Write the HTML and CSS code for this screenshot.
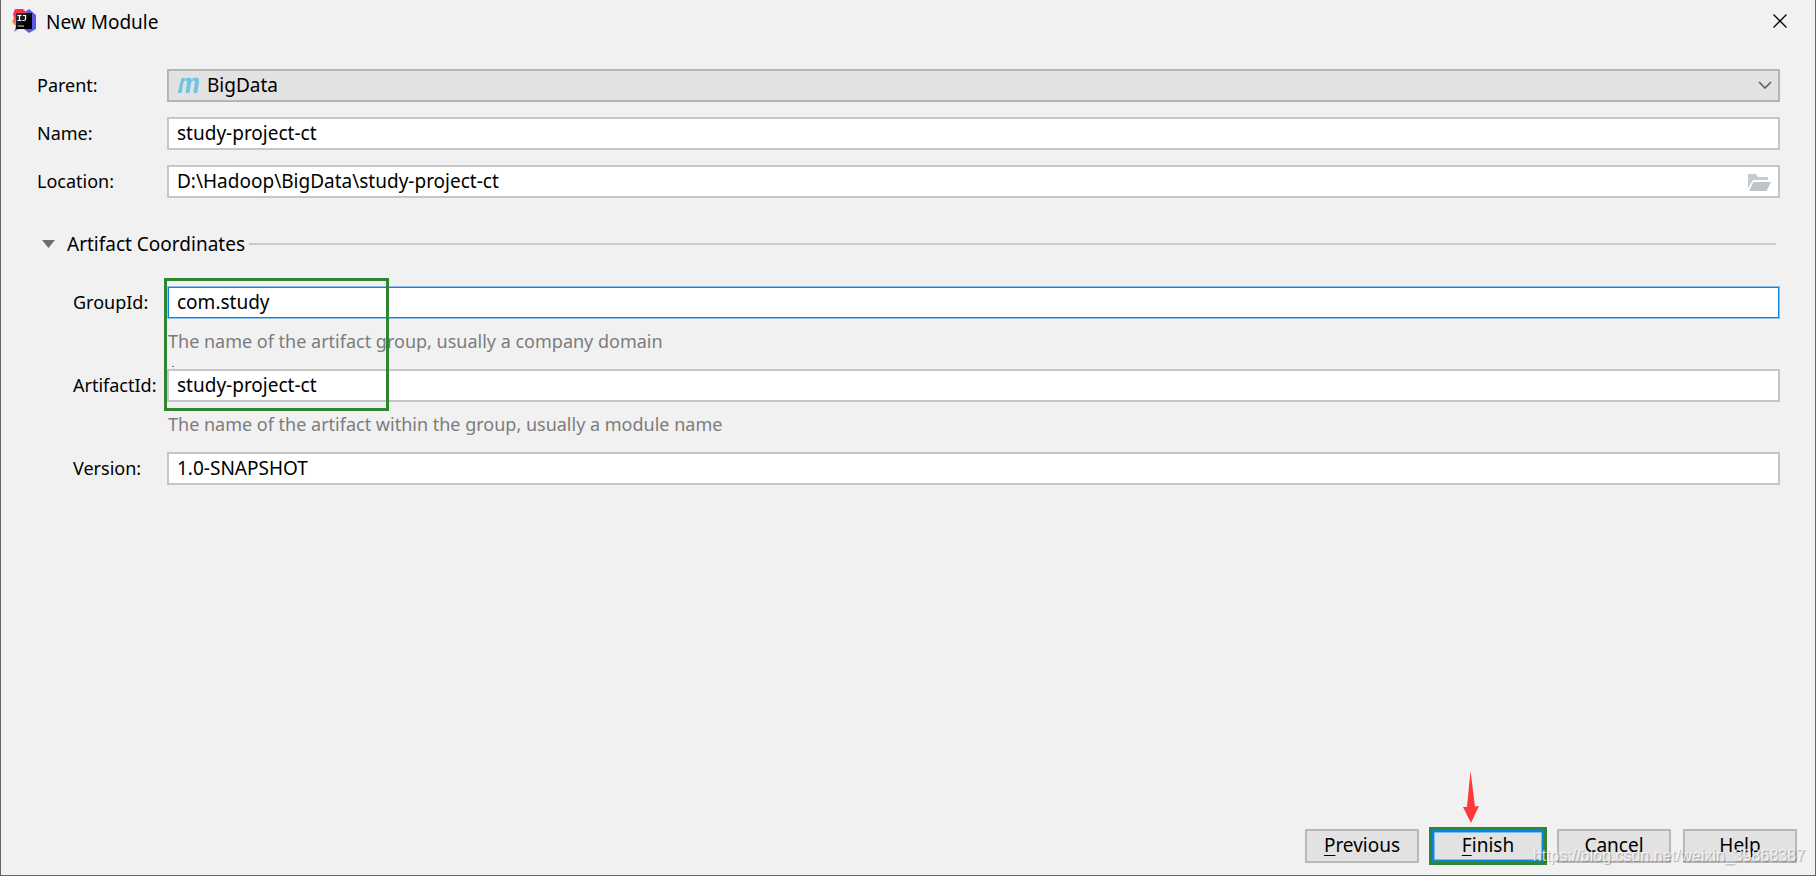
FILE: index.html
```html
<!DOCTYPE html>
<html lang="en">
<head>
<meta charset="utf-8">
<title>New Module</title>
<link rel="stylesheet" href="styles.css">
</head>
<body>
<main class="dialog">
  <header class="titlebar">
    <svg class="app-icon" viewBox="0 0 24 24" aria-hidden="true">
      <defs>
        <linearGradient id="blue" x1="0" y1="0" x2="1" y2="1"><stop offset="0" stop-color="#1b7df0"/><stop offset=".5" stop-color="#6a52e0"/><stop offset="1" stop-color="#3a68ea"/></linearGradient>
        <linearGradient id="warm" x1="0" y1="0" x2="0" y2="1"><stop offset="0" stop-color="#fe2857"/><stop offset=".35" stop-color="#fc3a55"/><stop offset=".6" stop-color="#fc8a24"/><stop offset=".75" stop-color="#e0507a"/><stop offset="1" stop-color="#a45be8"/></linearGradient>
        <linearGradient id="plate" x1="0" y1="0" x2="1" y2="1"><stop offset="0" stop-color="#3a3a3a"/><stop offset=".6" stop-color="#000"/></linearGradient>
      </defs>
      <path d="M13 3 17 0 24 6v14l-7 4-5-4z" fill="url(#blue)"/>
      <path d="M3 0h8l4 4-2 15H8l-6 4 2-6-4-4 2-4-1-4z" fill="url(#warm)"/>
      <path d="M4 4h16v16H4z" fill="url(#plate)"/>
      <path d="M5.500 6.500h4M7.500 6.500v5M5.500 11.500h4M11 6.500h3M13.500 6.500v3.500q0 1.500-1.500 1.500h-1.500" fill="none" stroke="#fff" stroke-width="1.200"/>
      <path d="M6 17h6" stroke="#ddd"/>
    </svg>
    <h1 class="title">New Module</h1>
    <button class="close" type="button" aria-label="Close"><svg viewBox="0 0 14 14"><path d="M.5.5l13 13M13.500.5l-13 13"/></svg></button>
  </header>

  <form class="form">
    <div class="fields">
      <label for="parent">Parent:</label>
      <div class="control">
        <select id="parent" class="field combo"><option>BigData</option></select>
        <svg class="maven" viewBox="0 0 23 17" aria-hidden="true"><path d="M3.500 1h3.800l-.3 1.800Q8.600.6 11 .6q2.300 0 2.700 2.200Q15.400.6 18 .6q3.900 0 3.200 4.200L19.500 16h-4L17 6q.4-2.400-1.200-2.400-2 0-2.700 3.400L11.700 16h-4l1.500-10q.4-2.400-1.200-2.400-2 0-2.700 3.400L4 16H0z" transform="translate(.8)"/></svg>
        <svg class="chevron" viewBox="0 0 14 8" aria-hidden="true"><path d="M1 1l6 6 6-6"/></svg>
      </div>
      <label for="name">Name:</label>
      <input id="name" class="field" type="text" value="study-project-ct">
      <label for="location">Location:</label>
      <div class="control">
        <input id="location" class="field path" type="text" value="D:\Hadoop\BigData\study-project-ct">
        <button class="browse" type="button" aria-label="Browse"><svg viewBox="0 0 23 17"><path d="M0 14V0h8l2 3h10v3H5z" fill="#c5cacf"/><path d="M5.500 8H23l-4.500 9H1z" fill="#bec4c8"/></svg></button>
      </div>
    </div>

    <div class="section">
      <button class="toggle" type="button" aria-expanded="true"><svg viewBox="0 0 13 8" aria-hidden="true"><path d="M0 0h13L6.500 8z"/></svg>Artifact Coordinates</button>
      <hr class="rule">
    </div>

    <div class="coordinates">
      <label for="group">GroupId:</label>
      <input id="group" class="field focused" type="text" value="com.study">
      <p class="hint clipped">The name of the artifact group, usually a company domain</p>
      <label for="artifact">ArtifactId:</label>
      <input id="artifact" class="field" type="text" value="study-project-ct">
      <p class="hint">The name of the artifact within the group, usually a module name</p>
      <label for="version">Version:</label>
      <input id="version" class="field" type="text" value="1.0-SNAPSHOT">
      <div class="highlight"></div>
    </div>
  </form>

  <footer class="actions">
    <button class="button" type="button"><u>P</u>revious</button>
    <button class="button primary" type="button"><u>F</u>inish
      <svg class="arrow" viewBox="0 0 16 52" aria-hidden="true"><path d="M7.500 0 12 35.500l4-.5L8 52 0 36l4 0z"/></svg>
    </button>
    <button class="button" type="button">Cancel</button>
    <button class="button" type="button">Help</button>
  </footer>
  <span class="watermark">https://blog.csdn.net/weixin_39868387</span>
</main>
</body>
</html>
```
FILE: styles.css
```css
* { box-sizing: border-box; }
body {
  margin: 0;
  background: #f1f1f1;
  color: #000;
  font: 19px/24px "Noto Sans", "Open Sans", sans-serif;
}
button, input, select { font: inherit; color: inherit; margin: 0; }
button { padding: 0; border: 0; background: none; }
svg { display: block; }

.dialog {
  position: relative;
  display: flex;
  flex-direction: column;
  min-height: 100vh;
  border: solid #666;
  border-width: 0 1px 1px;
}
.titlebar {
  display: flex;
  align-items: center;
  height: 44px;
  padding: 0 28px 2px 11px;
}
.app-icon { width: 24px; height: 24px; }
.title { flex: 1; margin: 0 0 0 10px; padding-top: 2px; font-size: 19px; font-weight: 400; }
.close svg { width: 14px; height: 14px; fill: none; stroke: #000; stroke-width: 1.3; }

.form { flex: 1; padding: 25px 35px 0 36px; }
.fields, .coordinates {
  display: grid;
  align-items: center;
}
.fields { grid-template-columns: 130px 1fr; row-gap: 15px; }
label { padding-bottom: 2px; font-size: 18px; }
.control { position: relative; }
.field {
  display: block;
  width: 100%;
  height: 33px;
  padding: 0 9px 2px;
  border: 1px solid #c6c6c6;
  border-radius: 0;
  background: #fff;
  box-shadow: inset 0 0 0 1px #c6c6c6;
  outline: 0;
}
.combo {
  appearance: none;
  padding-left: 39px;
  border-color: #b2b2b2;
  background: #e2e2e2;
  box-shadow: inset 0 0 0 1px #b8b8b8;
}
.path { padding-right: 40px; }
.focused { border-color: #8cc2ed; box-shadow: inset 0 0 0 1px #0a84dc; }
.maven { position: absolute; left: 10px; top: 8px; width: 23px; height: 17px; fill: #71c5e3; }
.chevron { position: absolute; right: 8px; top: 12px; width: 14px; height: 8px; fill: none; stroke: #5c5c5c; stroke-width: 1.6; }
.browse { position: absolute; right: 9px; top: 9px; }
.browse svg { width: 23px; height: 17px; }

.section { display: flex; align-items: center; gap: 4px; margin: 34px 4px 30px 5px; }
.toggle { display: flex; align-items: center; gap: 12px; }
.toggle svg { width: 13px; height: 8px; fill: #6e6e6e; }
.rule { flex: 1; height: 2px; margin: 0; border: 0; background: #c9c9c9; }

.coordinates { position: relative; grid-template-columns: 94px 1fr; padding-left: 36px; }
.hint {
  position: relative;
  grid-column: 2;
  margin: 0;
  padding: 10px 0 16px 1px;
  color: #7c7c7c;
  font-size: 18px;
}
.clipped::after {
  content: "";
  position: absolute;
  left: 5px;
  bottom: 2px;
  width: 2px;
  height: 1px;
  background: #777;
}
.highlight {
  position: absolute;
  left: 127px;
  top: -8px;
  width: 225px;
  height: 133px;
  border: 3px solid #2f8532;
}

.actions { display: flex; justify-content: flex-end; gap: 12px; padding: 0 18px 12px; }
.button {
  position: relative;
  width: 114px;
  height: 34px;
  padding-bottom: 2px;
  border: 2px solid #b8b8b8;
  background: #e2e2e2;
}
.primary {
  border: 3px solid #0a84dc;
  box-shadow: inset 0 0 0 1px #7dbdec;
  outline: 3px solid #2f8532;
  outline-offset: -1px;
}
.arrow { position: absolute; left: 29px; top: -61px; width: 16px; height: 52px; fill: #fc3838; }
.button u { text-underline-offset: 3px; }
.watermark {
  position: absolute;
  right: 10px;
  bottom: 7px;
  color: rgba(255, 255, 255, .75);
  font: 16px/24px "Liberation Sans", Arial, sans-serif;
  text-shadow: 1px 1px 1px rgba(0, 0, 0, .3);
  pointer-events: none;
}
```
